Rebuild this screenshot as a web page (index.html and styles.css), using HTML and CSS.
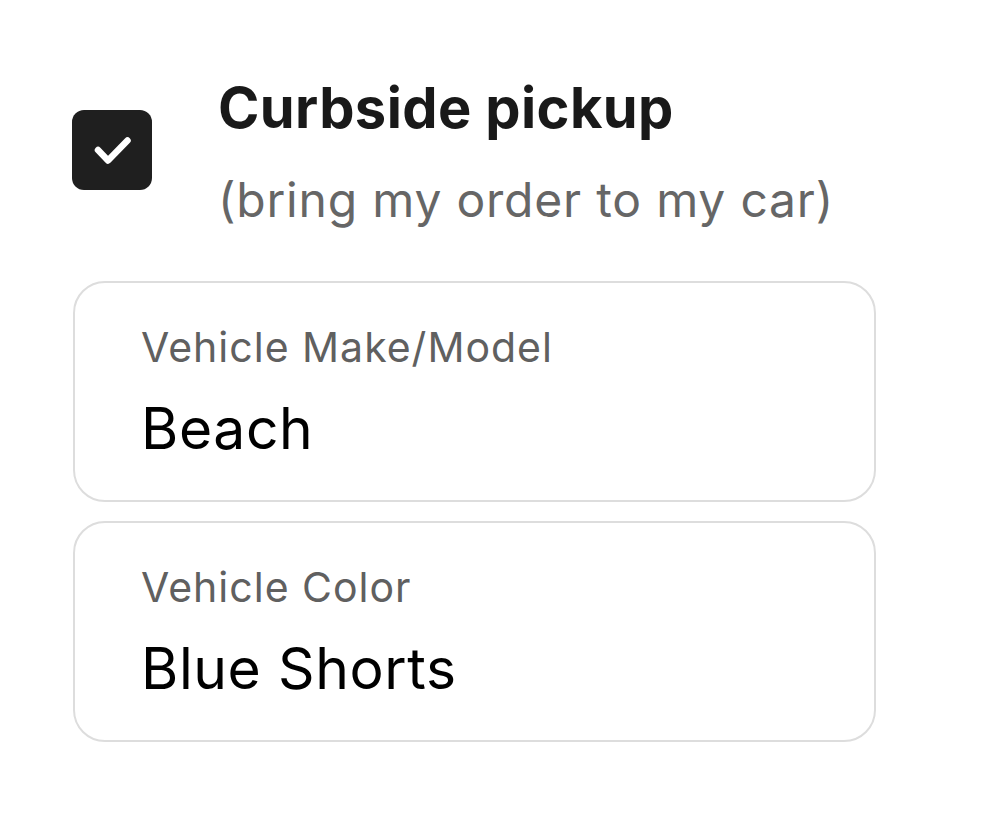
FILE: index.html
```html
<!DOCTYPE html>
<html lang="en">
<head>
<meta charset="utf-8">
<title>Curbside pickup</title>
<link rel="stylesheet" href="styles.css">
</head>
<body>
<main class="page">
  <label class="option">
    <span class="checkbox" role="checkbox" aria-checked="true">
      <svg class="check" viewBox="0 0 80 80" width="80" height="80" aria-hidden="true">
        <path d="M26 40 L36 50.5 L55.5 30.5" fill="none" stroke="#fff" stroke-width="6.5" stroke-linecap="round" stroke-linejoin="round"/>
      </svg>
    </span>
    <span class="option-text">
      <span class="option-title">Curbside pickup</span>
      <span class="option-sub">(bring my order to my car)</span>
    </span>
  </label>
  <div class="fields">
    <div class="field">
      <div class="field-label">Vehicle Make/Model</div>
      <div class="field-value">Beach</div>
    </div>
    <div class="field">
      <div class="field-label">Vehicle Color</div>
      <div class="field-value">Blue Shorts</div>
    </div>
  </div>
</main>
</body>
</html>
```

FILE: styles.css
```css
* { box-sizing: border-box; }

html, body {
  margin: 0;
  padding: 0;
  background: #ffffff;
}

body {
  font-family: Inter, Lato, "Noto Sans", "Liberation Sans", sans-serif;
  color: #191919;
}

.page {
  padding: 76px 0 0 72px;
  width: 876px;
}

.option {
  display: flex;
  align-items: flex-start;
  gap: 66px;
}

.checkbox {
  flex: none;
  width: 80px;
  height: 80px;
  margin-top: 34px;
  background: #1f1f1f;
  border-radius: 12px;
  display: block;
}

.check {
  display: block;
}

.option-text {
  display: flex;
  flex-direction: column;
}

.option-title {
  font-size: 56px;
  line-height: 64px;
  font-weight: 700;
  letter-spacing: 0.4px;
  color: #191919;
}

.option-sub {
  margin-top: 32px;
  font-size: 48px;
  line-height: 56px;
  letter-spacing: 0.8px;
  color: #666666;
}

.fields {
  margin-top: 53px;
  margin-left: 1px;
  display: flex;
  flex-direction: column;
  gap: 19px;
}

.field {
  width: 803px;
  height: 221px;
  border: 2.5px solid #dddddd;
  border-radius: 32px;
  padding: 40px 0 0 66px;
}

.field-label {
  font-size: 41px;
  line-height: 48px;
  letter-spacing: 1px;
  color: #606060;
}

.field-value {
  margin-top: 25px;
  font-size: 57px;
  line-height: 66px;
  letter-spacing: 0.6px;
  color: #000000;
}
```
